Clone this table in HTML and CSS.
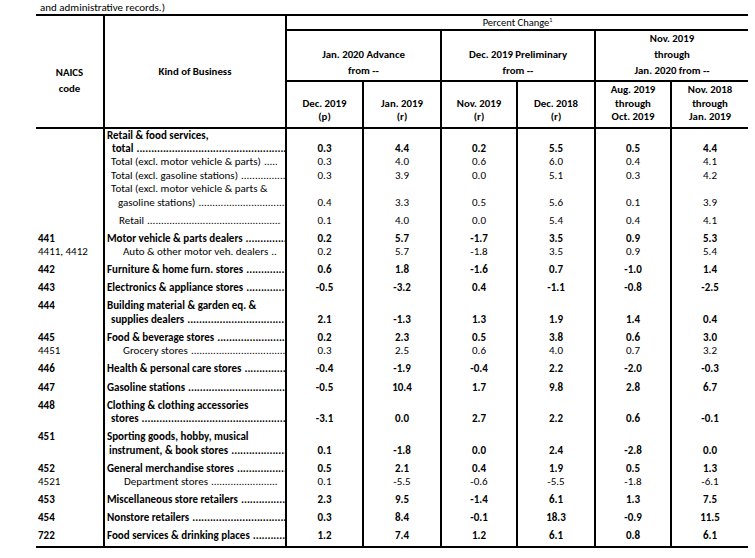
FILE: index.html
```html
<!DOCTYPE html>
<html>
<head>
<meta charset="utf-8">
<link rel="stylesheet" href="styles.css">
</head>
<body>
<div class="page">
  <p class="note">and administrative records.)</p>
  <table class="tbl">
    <colgroup>
      <col class="c-naics"><col class="c-kind"><col class="c-a"><col class="c-b"><col class="c-a2"><col class="c-b"><col class="c-a2"><col class="c-last">
    </colgroup>
    <thead>
      <tr class="h1">
        <th rowspan="3" class="naics-h">NAICS<br>code</th>
        <th rowspan="3" class="kind-h">Kind of Business</th>
        <th colspan="6" class="pc">Percent Change<sup>1</sup></th>
      </tr>
      <tr class="h2">
        <th colspan="2" class="grp">Jan. 2020 Advance<br>from --</th>
        <th colspan="2" class="grp">Dec. 2019 Preliminary<br>from --</th>
        <th colspan="2" class="grp3">Nov. 2019<br>through<br>Jan. 2020 from --</th>
      </tr>
      <tr class="h3">
        <th>Dec. 2019<br>(p)</th>
        <th>Jan. 2019<br>(r)</th>
        <th>Nov. 2019<br>(r)</th>
        <th>Dec. 2018<br>(r)</th>
        <th>Aug. 2019<br>through<br>Oct. 2019</th>
        <th>Nov. 2018<br>through<br>Jan. 2019</th>
      </tr>
    </thead>
    <tbody>
      <tr class="b">
        <td></td>
        <td class="lab"><div>Retail &amp; food services,</div><div class="ld i5"><span>total</span><span class="dots"></span></div></td>
        <td>0.3</td><td>4.4</td><td>0.2</td><td>5.5</td><td>0.5</td><td>4.4</td>
      </tr>
      <tr>
        <td></td>
        <td class="lab"><div class="ld i4 e8"><span>Total (excl. motor vehicle &amp; parts)</span><span class="dots"></span></div></td>
        <td>0.3</td><td>4.0</td><td>0.6</td><td>6.0</td><td>0.4</td><td>4.1</td>
      </tr>
      <tr>
        <td></td>
        <td class="lab"><div class="ld i4"><span>Total (excl. gasoline stations)</span><span class="dots"></span></div></td>
        <td>0.3</td><td>3.9</td><td>0.0</td><td>5.1</td><td>0.3</td><td>4.2</td>
      </tr>
      <tr>
        <td></td>
        <td class="lab"><div class="i4">Total (excl. motor vehicle &amp; parts &amp;</div><div class="ld i11"><span>gasoline stations)</span><span class="dots"></span></div></td>
        <td>0.4</td><td>3.3</td><td>0.5</td><td>5.6</td><td>0.1</td><td>3.9</td>
      </tr>
      <tr class="g">
        <td></td>
        <td class="lab"><div class="ld i12 e4"><span>Retail</span><span class="dots"></span></div></td>
        <td>0.1</td><td>4.0</td><td>0.0</td><td>5.4</td><td>0.4</td><td>4.1</td>
      </tr>
      <tr class="g b">
        <td class="code">441</td>
        <td class="lab"><div class="ld"><span>Motor vehicle &amp; parts dealers</span><span class="dots"></span></div></td>
        <td>0.2</td><td>5.7</td><td>-1.7</td><td>3.5</td><td>0.9</td><td>5.3</td>
      </tr>
      <tr>
        <td class="code">4411, 4412</td>
        <td class="lab"><div class="ld i16 e8"><span>Auto &amp; other motor veh. dealers</span><span class="dots"></span></div></td>
        <td>0.2</td><td>5.7</td><td>-1.8</td><td>3.5</td><td>0.9</td><td>5.4</td>
      </tr>
      <tr class="g b">
        <td class="code">442</td>
        <td class="lab"><div class="ld"><span>Furniture &amp; home furn. stores</span><span class="dots"></span></div></td>
        <td>0.6</td><td>1.8</td><td>-1.6</td><td>0.7</td><td>-1.0</td><td>1.4</td>
      </tr>
      <tr class="g b">
        <td class="code">443</td>
        <td class="lab"><div class="ld"><span>Electronics &amp; appliance stores</span><span class="dots"></span></div></td>
        <td>-0.5</td><td>-3.2</td><td>0.4</td><td>-1.1</td><td>-0.8</td><td>-2.5</td>
      </tr>
      <tr class="g b">
        <td class="code">444</td>
        <td class="lab"><div>Building material &amp; garden eq. &amp;</div><div class="ld i4"><span>supplies dealers</span><span class="dots"></span></div></td>
        <td>2.1</td><td>-1.3</td><td>1.3</td><td>1.9</td><td>1.4</td><td>0.4</td>
      </tr>
      <tr class="g b">
        <td class="code">445</td>
        <td class="lab"><div class="ld"><span>Food &amp; beverage stores</span><span class="dots"></span></div></td>
        <td>0.2</td><td>2.3</td><td>0.5</td><td>3.8</td><td>0.6</td><td>3.0</td>
      </tr>
      <tr>
        <td class="code">4451</td>
        <td class="lab"><div class="ld i16"><span>Grocery stores</span><span class="dots"></span></div></td>
        <td>0.3</td><td>2.5</td><td>0.6</td><td>4.0</td><td>0.7</td><td>3.2</td>
      </tr>
      <tr class="g b">
        <td class="code">446</td>
        <td class="lab"><div class="ld"><span>Health &amp; personal care stores</span><span class="dots"></span></div></td>
        <td>-0.4</td><td>-1.9</td><td>-0.4</td><td>2.2</td><td>-2.0</td><td>-0.3</td>
      </tr>
      <tr class="g b">
        <td class="code">447</td>
        <td class="lab"><div class="ld"><span>Gasoline stations</span><span class="dots"></span></div></td>
        <td>-0.5</td><td>10.4</td><td>1.7</td><td>9.8</td><td>2.8</td><td>6.7</td>
      </tr>
      <tr class="g b">
        <td class="code">448</td>
        <td class="lab"><div>Clothing &amp; clothing accessories</div><div class="ld i4"><span>stores</span><span class="dots"></span></div></td>
        <td>-3.1</td><td>0.0</td><td>2.7</td><td>2.2</td><td>0.6</td><td>-0.1</td>
      </tr>
      <tr class="g b">
        <td class="code">451</td>
        <td class="lab"><div>Sporting goods, hobby, musical</div><div class="ld i2"><span>instrument, &amp; book stores</span><span class="dots"></span></div></td>
        <td>0.1</td><td>-1.8</td><td>0.0</td><td>2.4</td><td>-2.8</td><td>0.0</td>
      </tr>
      <tr class="g b">
        <td class="code">452</td>
        <td class="lab"><div class="ld"><span>General merchandise stores</span><span class="dots"></span></div></td>
        <td>0.5</td><td>2.1</td><td>0.4</td><td>1.9</td><td>0.5</td><td>1.3</td>
      </tr>
      <tr>
        <td class="code">4521</td>
        <td class="lab"><div class="ld i17 e7"><span>Department stores</span><span class="dots"></span></div></td>
        <td>0.1</td><td>-5.5</td><td>-0.6</td><td>-5.5</td><td>-1.8</td><td>-6.1</td>
      </tr>
      <tr class="g b">
        <td class="code">453</td>
        <td class="lab"><div class="ld"><span>Miscellaneous store retailers</span><span class="dots"></span></div></td>
        <td>2.3</td><td>9.5</td><td>-1.4</td><td>6.1</td><td>1.3</td><td>7.5</td>
      </tr>
      <tr class="g b">
        <td class="code">454</td>
        <td class="lab"><div class="ld"><span>Nonstore retailers</span><span class="dots"></span></div></td>
        <td>0.3</td><td>8.4</td><td>-0.1</td><td>18.3</td><td>-0.9</td><td>11.5</td>
      </tr>
      <tr class="g b last">
        <td class="code">722</td>
        <td class="lab"><div class="ld"><span>Food services &amp; drinking places</span><span class="dots"></span></div></td>
        <td>1.2</td><td>7.4</td><td>1.2</td><td>6.1</td><td>0.8</td><td>6.1</td>
      </tr>
    </tbody>
  </table>
</div>
</body>
</html>
```

FILE: styles.css
```css
html, body {
  margin: 0;
  padding: 0;
  background: #fff;
}
body {
  font-family: Carlito, Calibri, Lato, "Liberation Sans", sans-serif;
  font-size: 11px;
  color: #000;
}
.page {
  padding-left: 36px;
  width: 712px;
}
.note {
  margin: 0;
  padding-left: 4px;
  height: 14px;
  line-height: 15px;
}
.tbl {
  border-collapse: collapse;
  table-layout: fixed;
  width: 712px;
  border-top: 2px solid #000;
  border-bottom: 2px solid #000;
}
.c-naics { width: 68px; }
.c-kind { width: 182px; }
.c-a { width: 77px; }
.c-b { width: 78px; }
.c-a2 { width: 76px; }
.c-last { width: 77px; }

.tbl th, .tbl td {
  padding: 0;
  border-left: 2px solid #000;
  text-align: center;
  white-space: nowrap;
}
.tbl th:first-child, .tbl td:first-child {
  border-left: none;
}
.tbl thead tr.h2 th:first-child,
.tbl thead tr.h3 th:first-child {
  border-left: 2px solid #000;
}
.tbl th {
  font-weight: bold;
  font-size: 10.8px;
}
.h1 { height: 15px; }
.h2 { height: 49px; }
.h3 { height: 47px; }
.h1 .pc, .h2 th {
  border-bottom: 2px solid #000;
}
.h3 th {
  border-bottom: 2px solid #000;
  line-height: 13.4px;
  vertical-align: bottom;
  padding-bottom: 3px;
}
.pc {
  font-weight: normal !important;
  font-size: 10.5px !important;
  line-height: 13px;
}
.pc sup {
  font-size: 6px;
  vertical-align: top;
  position: relative;
  top: -2px;
}
.grp {
  vertical-align: top;
  line-height: 16.5px;
  padding-top: 15.5px !important;
}
.grp3 {
  line-height: 16px;
  vertical-align: middle;
}
.naics-h {
  vertical-align: top;
  line-height: 16px;
  padding-top: 49px !important;
  border-bottom: 2px solid #000;
}
.kind-h {
  vertical-align: middle;
  border-bottom: 2px solid #000;
}

.tbl tbody td {
  line-height: 13.4px;
  vertical-align: bottom;
}
.tbl tbody tr.g td {
  padding-top: 4.7px;
}
.tbl tbody tr.last td {
  padding-bottom: 3px;
}
.tbl tbody tr.b td {
  font-weight: bold;
}
.tbl td.code {
  text-align: left;
  padding-left: 2px;
  vertical-align: top;
}
.tbl td.lab {
  text-align: left;
  padding-left: 2px;
}
.ld {
  display: flex;
  overflow: hidden;
}
.ld span:first-child {
  flex: none;
}
.dots {
  flex: 1;
  overflow: hidden;
  white-space: nowrap;
  padding-left: 3px;
  font-weight: normal;
}
.b .dots {
  font-weight: bold;
}
.dots::after {
  content: "........................................................................................................................................................";
}
.i2 { padding-left: 2px; }
.i4 { padding-left: 4px; }
.i5 { padding-left: 5px; }
.i11 { padding-left: 11px; }
.i12 { padding-left: 12px; }
.i16 { padding-left: 16px; }
.i17 { padding-left: 17px; }
.e4 { padding-right: 4px; }
.e7 { padding-right: 7px; }
.e8 { padding-right: 8px; }
```
